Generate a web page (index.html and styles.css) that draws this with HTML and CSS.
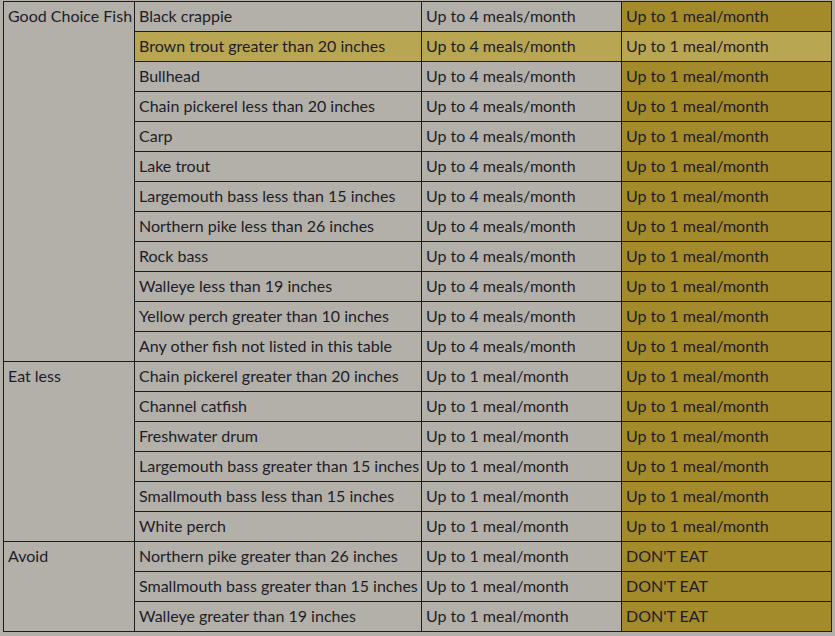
FILE: index.html
```html
<!DOCTYPE html>
<html lang="en">
<head>
<meta charset="utf-8">
<title>Fish consumption advisory</title>
<link rel="stylesheet" href="styles.css">
</head>
<body>
<div class="wrap">
<table class="advice">
<colgroup>
<col class="c1"><col class="c2"><col class="c3"><col class="c4">
</colgroup>
<tbody>
<tr><th rowspan="12">Good Choice Fish</th><td>Black crappie</td><td>Up to 4 meals/month</td><td class="gold">Up to 1 meal/month</td></tr>
<tr class="hl"><td>Brown trout greater than 20 inches</td><td>Up to 4 meals/month</td><td class="gold">Up to 1 meal/month</td></tr>
<tr><td>Bullhead</td><td>Up to 4 meals/month</td><td class="gold">Up to 1 meal/month</td></tr>
<tr><td>Chain pickerel less than 20 inches</td><td>Up to 4 meals/month</td><td class="gold">Up to 1 meal/month</td></tr>
<tr><td>Carp</td><td>Up to 4 meals/month</td><td class="gold">Up to 1 meal/month</td></tr>
<tr><td>Lake trout</td><td>Up to 4 meals/month</td><td class="gold">Up to 1 meal/month</td></tr>
<tr><td>Largemouth bass less than 15 inches</td><td>Up to 4 meals/month</td><td class="gold">Up to 1 meal/month</td></tr>
<tr><td>Northern pike less than 26 inches</td><td>Up to 4 meals/month</td><td class="gold">Up to 1 meal/month</td></tr>
<tr><td>Rock bass</td><td>Up to 4 meals/month</td><td class="gold">Up to 1 meal/month</td></tr>
<tr><td>Walleye less than 19 inches</td><td>Up to 4 meals/month</td><td class="gold">Up to 1 meal/month</td></tr>
<tr><td>Yellow perch greater than 10 inches</td><td>Up to 4 meals/month</td><td class="gold">Up to 1 meal/month</td></tr>
<tr><td>Any other fish not listed in this table</td><td>Up to 4 meals/month</td><td class="gold">Up to 1 meal/month</td></tr>
<tr><th rowspan="6">Eat less</th><td>Chain pickerel greater than 20 inches</td><td>Up to 1 meal/month</td><td class="gold">Up to 1 meal/month</td></tr>
<tr><td>Channel catfish</td><td>Up to 1 meal/month</td><td class="gold">Up to 1 meal/month</td></tr>
<tr><td>Freshwater drum</td><td>Up to 1 meal/month</td><td class="gold">Up to 1 meal/month</td></tr>
<tr><td>Largemouth bass greater than 15 inches</td><td>Up to 1 meal/month</td><td class="gold">Up to 1 meal/month</td></tr>
<tr><td>Smallmouth bass less than 15 inches</td><td>Up to 1 meal/month</td><td class="gold">Up to 1 meal/month</td></tr>
<tr><td>White perch</td><td>Up to 1 meal/month</td><td class="gold">Up to 1 meal/month</td></tr>
<tr><th rowspan="3">Avoid</th><td>Northern pike greater than 26 inches</td><td>Up to 1 meal/month</td><td class="gold">DON'T EAT</td></tr>
<tr><td>Smallmouth bass greater than 15 inches</td><td>Up to 1 meal/month</td><td class="gold">DON'T EAT</td></tr>
<tr><td>Walleye greater than 19 inches</td><td>Up to 1 meal/month</td><td class="gold">DON'T EAT</td></tr>
</tbody>
</table>
</div>
</body>
</html>
```

FILE: styles.css
```css
html, body {
  margin: 0;
  padding: 0;
  background: #b3b0aa;
}

.wrap {
  padding: 1px 0 0 3px;
}

.advice {
  border-collapse: collapse;
  table-layout: fixed;
  width: 828px;
  font-family: "Lato", "Open Sans", sans-serif;
  font-size: 16px;
  color: #1d1d28;
  background: #b3b0aa;
}

.c1 { width: 131px; }
.c2 { width: 287px; }
.c3 { width: 200px; }
.c4 { width: 210px; }

.advice th,
.advice td {
  border: 1px solid #1c1c1c;
  height: 29px;
  padding: 0 0 2px 4px;
  box-sizing: border-box;
  text-align: left;
  font-weight: normal;
  white-space: nowrap;
  overflow: hidden;
  line-height: 27px;
}

.advice th {
  vertical-align: top;
}

.advice td.gold {
  background: #a38a2b;
}

.advice tr.hl td,
.advice tr.hl td.gold {
  background: #b9a652;
}
```
